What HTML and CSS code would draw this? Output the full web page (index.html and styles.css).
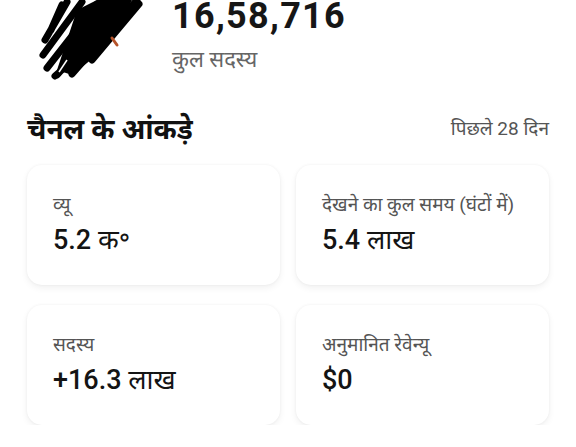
FILE: index.html
```html
<!DOCTYPE html>
<html lang="hi">
<head>
    <meta charset="UTF-8">
    <meta name="viewport" content="width=device-width, initial-scale=1.0">
    <title>चैनल के आंकड़े</title>
    <link rel="stylesheet" href="styles.css">
</head>
<body>
    <div class="channel-head">
        <!-- avatar (scribbled over in the original) -->
        <svg class="avatar" width="110" height="80" viewBox="0 0 110 80">
            <path d="M20 70 L40 10 L60 0 L95 0 L80 30 L60 55 L35 75 Z" fill="#000"/>
            <path d="M8 40 L30 2 M6 55 L45 2 M10 68 L60 4 M20 75 L85 3 M35 74 L100 0 M55 60 L102 4 M14 30 L25 5 M18 76 L70 30"
                  stroke="#000" stroke-width="7" stroke-linecap="round" fill="none"/>
            <path d="M75 38 L80 45" stroke="#b5532a" stroke-width="3" stroke-linecap="round"/>
            <path d="M22 72 L30 60" stroke="#fff" stroke-width="1.5"/>
        </svg>
        <div class="head-text">
            <div class="sub-count">16,58,716</div>
            <div class="sub-label">कुल सदस्य</div>
        </div>
    </div>

    <div class="section-head">
        <h2>चैनल के आंकड़े</h2>
        <span class="period">पिछले 28 दिन</span>
    </div>

    <div class="stats-grid">
        <div class="stat-card">
            <div class="stat-label">व्यू</div>
            <div class="stat-value">5.2 <span class="unit">क॰</span></div>
        </div>
        <div class="stat-card">
            <div class="stat-label">देखने का कुल समय (घंटों में)</div>
            <div class="stat-value">5.4 <span class="unit">लाख</span></div>
        </div>
        <div class="stat-card">
            <div class="stat-label">सदस्य</div>
            <div class="stat-value">+16.3 <span class="unit">लाख</span></div>
        </div>
        <div class="stat-card">
            <div class="stat-label">अनुमानित रेवेन्यू</div>
            <div class="stat-value">$0</div>
        </div>
    </div>
</body>
</html>
```

FILE: styles.css
```css
* {
    box-sizing: border-box;
    margin: 0;
    padding: 0;
}

body {
    font-family: Roboto, "Noto Sans", "Noto Sans Devanagari", sans-serif;
    background: #fff;
    color: #111;
    padding: 0 27px;
}

.channel-head {
    display: flex;
    align-items: flex-start;
    gap: 25px;
    padding-left: 10px;
    height: 90px;
}

.avatar {
    display: block;
}

.sub-count {
    font-size: 36px;
    font-weight: 700;
    line-height: 32px;
    letter-spacing: 1.3px;
    color: #161616;
}

.sub-label {
    margin-top: 14px;
    font-size: 22px;
    line-height: 28px;
    color: #666;
}

.section-head {
    display: flex;
    justify-content: space-between;
    align-items: center;
    margin-top: 16px;
    height: 44px;
}

.section-head h2 {
    font-size: 28px;
    font-weight: 700;
    color: #111;
}

.period {
    font-size: 19px;
    color: #555;
}

.stats-grid {
    display: grid;
    grid-template-columns: 1fr 1fr;
    gap: 20px 16px;
    margin-top: 15px;
}

.stat-card {
    height: 120px;
    border-radius: 15px;
    background: #fff;
    box-shadow: 0 3px 7px rgba(0, 0, 0, 0.06), 0 0 3px rgba(0, 0, 0, 0.05);
    padding: 26px 26px;
}

.stat-label {
    font-size: 19px;
    line-height: 28px;
    color: #555;
}

.stat-value {
    margin-top: 4px;
    font-size: 27px;
    font-weight: 500;
    line-height: 34px;
    color: #141414;
}

.stat-value .unit {
    font-weight: 400;
}
```
